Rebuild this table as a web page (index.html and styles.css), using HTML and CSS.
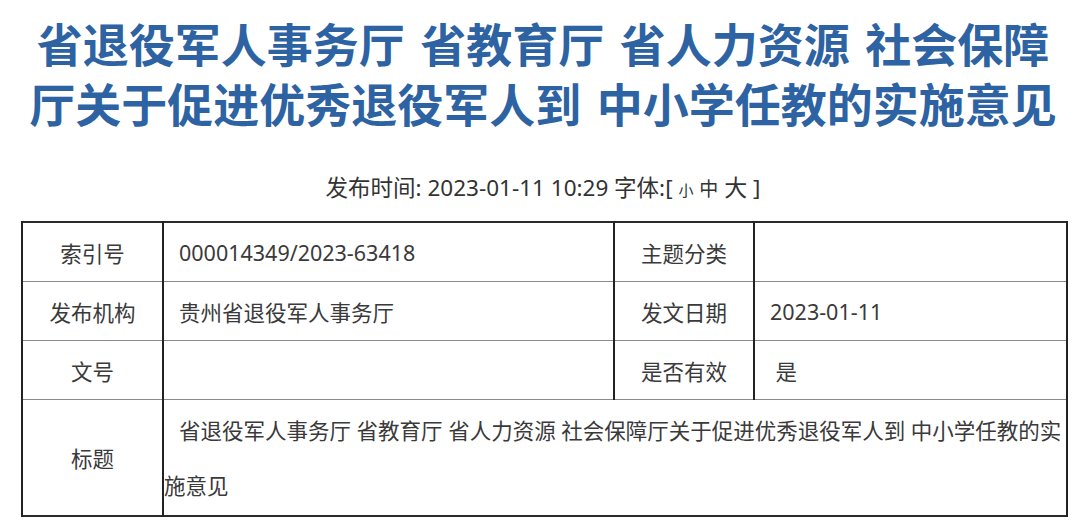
FILE: index.html
```html
<!DOCTYPE html>
<html lang="zh-CN">
<head>
<meta charset="utf-8">
<title>省退役军人事务厅 省教育厅 省人力资源 社会保障厅关于促进优秀退役军人到 中小学任教的实施意见</title>
<link rel="stylesheet" href="styles.css">
</head>
<body>
<div class="page">
  <h1 class="title">省退役军人事务厅 省教育厅 省人力资源 社会保障<br>厅关于促进优秀退役军人到 中小学任教的实施意见</h1>
  <div class="meta">发布时间: 2023-01-11 10:29 字体:[ <span class="fs-s">小</span> <span class="fs-m">中</span> <span class="fs-l">大</span> ]</div>
  <table class="info">
    <colgroup>
      <col class="c1"><col class="c2"><col class="c3"><col class="c4">
    </colgroup>
    <tr class="row">
      <td class="label">索引号</td>
      <td class="value">000014349/2023-63418</td>
      <td class="label">主题分类</td>
      <td class="value"></td>
    </tr>
    <tr class="row">
      <td class="label">发布机构</td>
      <td class="value">贵州省退役军人事务厅</td>
      <td class="label">发文日期</td>
      <td class="value">2023-01-11</td>
    </tr>
    <tr class="row">
      <td class="label">文号</td>
      <td class="value"></td>
      <td class="label">是否有效</td>
      <td class="value">&nbsp;是</td>
    </tr>
    <tr class="row-tall">
      <td class="label">标题</td>
      <td class="long" colspan="3">省退役军人事务厅 省教育厅 省人力资源 社会保障厅关于促进优秀退役军人到 中小学任教的实施意见</td>
    </tr>
  </table>
</div>
</body>
</html>
```

FILE: styles.css
```css
html, body {
  margin: 0;
  padding: 0;
  background: #ffffff;
}

.page {
  width: 1080px;
  height: 528px;
  overflow: hidden;
}

.title {
  margin: 0;
  padding: 12px 0 0 6px;
  font-family: "Noto Sans CJK SC", "Noto Sans", sans-serif;
  font-weight: 700;
  font-size: 46px;
  line-height: 60px;
  word-spacing: 5px;
  color: #2e63a3;
  text-align: center;
  white-space: nowrap;
}

.meta {
  margin-top: 40px;
  padding-left: 6px;
  font-family: "Noto Sans", "Noto Sans CJK SC", sans-serif;
  font-size: 22.5px;
  line-height: 30px;
  color: #333333;
  text-align: center;
}

.fs-s { font-size: 15px; }
.fs-m { font-size: 19px; }
.fs-l { font-size: 23px; }

.info {
  margin: 16px 0 0 21px;
  width: 1045px;
  table-layout: fixed;
  border-collapse: collapse;
  border: 2px solid #2a2a2a;
  border-right-color: #777777;
  font-family: "Noto Sans", "Noto Sans CJK SC", sans-serif;
  font-size: 21.5px;
  color: #3a3a3a;
}

.c1 { width: 141px; }
.c2 { width: 451px; }
.c3 { width: 140px; }
.c4 { width: 313px; }

.info td {
  border-top: 1px solid #8a8a8a;
  border-bottom: 1px solid #8a8a8a;
  border-left: 2px solid #222222;
  border-right: 2px solid #222222;
  vertical-align: middle;
}

.row td {
  height: 58px;
  padding: 0;
}

.row-tall td {
  height: 115px;
  padding: 0;
}

.label {
  text-align: center;
}

.value {
  padding: 0 0 0 15px !important;
  text-align: left;
}

.long {
  text-align: left;
  text-indent: 15px;
  line-height: 55px;
}
```
